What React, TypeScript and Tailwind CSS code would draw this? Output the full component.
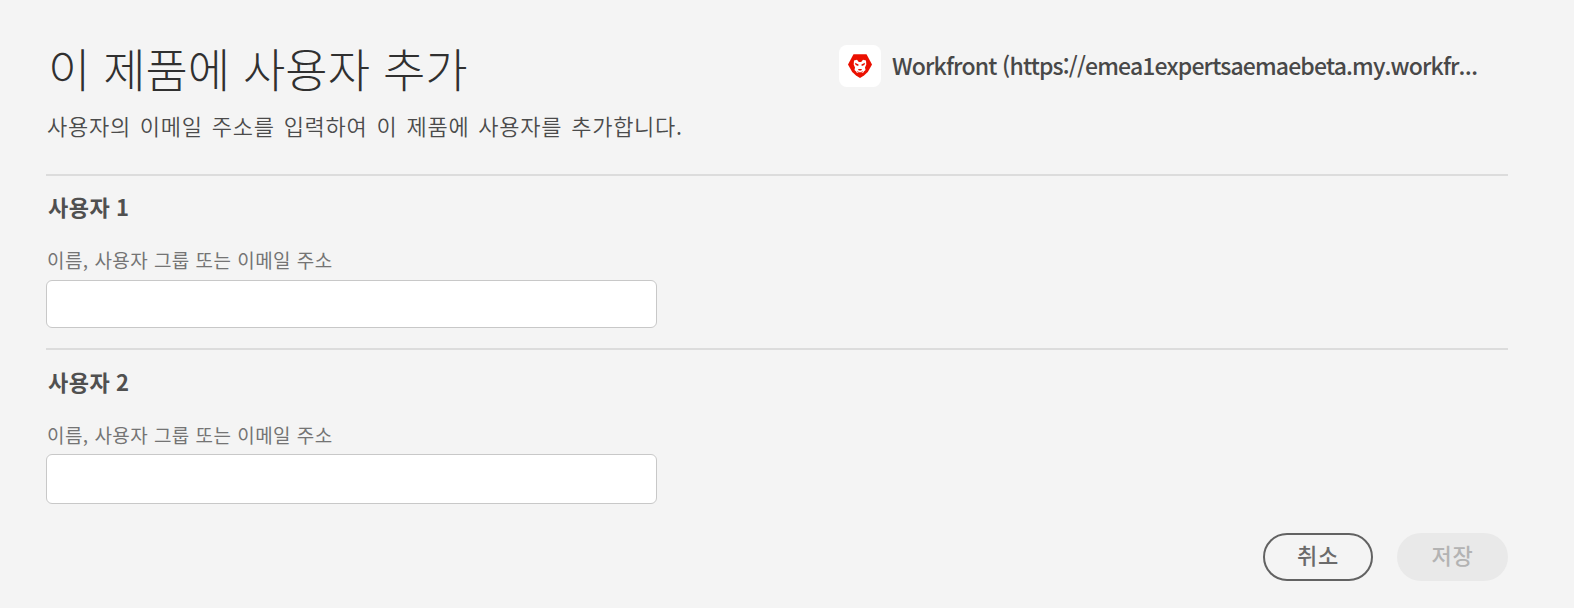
type UserFieldsProps = { index: number; headingClass: string; inputClass: string };

function UserFields({ index, headingClass, inputClass }: UserFieldsProps) {
  return (
    <section className="border-t-2 border-[#dcdcdc]">
      <h2 className={`ml-[2px] h-8 whitespace-nowrap text-[22px] font-bold leading-8 tracking-[0.5px] text-[#505050] [word-spacing:-1px] ${headingClass}`}>
        사용자 {index}
      </h2>
      <label className="block">
        <span className="ml-[1px] mt-[24px] block h-7 whitespace-nowrap text-[19px] leading-7 tracking-[0.45px] text-[#747474]">
          이름, 사용자 그룹 또는 이메일 주소
        </span>
        <input
          type="text"
          className={`block w-[611px] rounded-[6px] border border-[#c8c8c8] bg-white px-4 text-[20px] outline-none ${inputClass}`}
        />
      </label>
    </section>
  );
}

function ProductLogo() {
  return (
    <div className="flex size-[42px] shrink-0 items-center justify-center rounded-[8px] bg-white">
      <svg viewBox="0 0 24 24" className="size-6" aria-hidden="true">
        <path d="M5.500 .3h13L24 10.500 19.800 18 16 21.500 12 24 8 21.500 4.200 18 0 10.500z" fill="#eb1000" />
        <path
          d="M6 6.600 9 5.800 10.800 8h2.400L15 5.800l3 .8.300 4-1.300 3 .5 2.400-1.700 1.500-.8 1.500h-6l-.8-1.500L6.500 16l.5-2.400-1.300-3z"
          fill="#fff"
        />
        <path d="m7 8.800 3.600 1.800-.4 1.400-2.600-1zM17 8.800l-3.600 1.800.4 1.400 2.600-1zM10 15h4l-.8 1.400h-2.400zM9 17.400h1l.8.700h2.400l.8-.7h1v.6l-1 .8h-4l-1-.8z" fill="#eb1000" />
      </svg>
    </div>
  );
}

export default function App() {
  return (
    <main
      lang="ko"
      className="h-[608px] w-[1574px] overflow-hidden bg-[#f4f4f4] pl-[46px] pr-[66px] pt-[35px] font-['Noto_Sans_CJK_KR','Noto_Sans',sans-serif]"
    >
      <header className="flex h-[139px] items-start justify-between">
        <div>
          <h1 className="ml-[2px] h-16 whitespace-nowrap text-[46px] font-light leading-[64px] text-[#303030]">
            이 제품에 사용자 추가
          </h1>
          <p className="ml-[1px] mt-[10px] whitespace-nowrap text-[22px] font-[350] leading-8 tracking-[0.75px] text-[#4b4b4b] [word-spacing:2px]">
            사용자의 이메일 주소를 입력하여 이 제품에 사용자를 추가합니다.
          </p>
        </div>
        <div className="mt-[9px] flex w-[669px] items-center gap-[11px]">
          <ProductLogo />
          <span className="whitespace-nowrap text-[23px] font-medium leading-[42px] tracking-[-0.84px] text-[#484848]">
            Workfront (https://emea1expertsaemaebeta.my.workfr
            <span className="font-['Noto_Sans'] font-semibold tracking-normal">…</span>
          </span>
        </div>
      </header>

      <UserFields index={1} headingClass="mt-[14px]" inputClass="mt-[6px] h-12" />
      <div className="h-[20px]" />
      <UserFields index={2} headingClass="mt-[15px]" inputClass="mt-[5px] h-[50px]" />

      <footer className="mt-[29px] flex justify-end gap-6">
        <button
          type="button"
          className="h-12 w-[110px] rounded-full border-2 border-[#626262] pb-[7px] text-[22px] font-medium leading-8 tracking-[0.8px] text-[#6b6b6b]"
        >
          취소
        </button>
        <button
          type="button"
          disabled
          className="h-12 w-[111px] rounded-full bg-[#e9e9e9] pb-[7px] text-[22px] font-medium leading-8 tracking-[0.8px] text-[#b3b3b3]"
        >
          저장
        </button>
      </footer>
    </main>
  );
}
